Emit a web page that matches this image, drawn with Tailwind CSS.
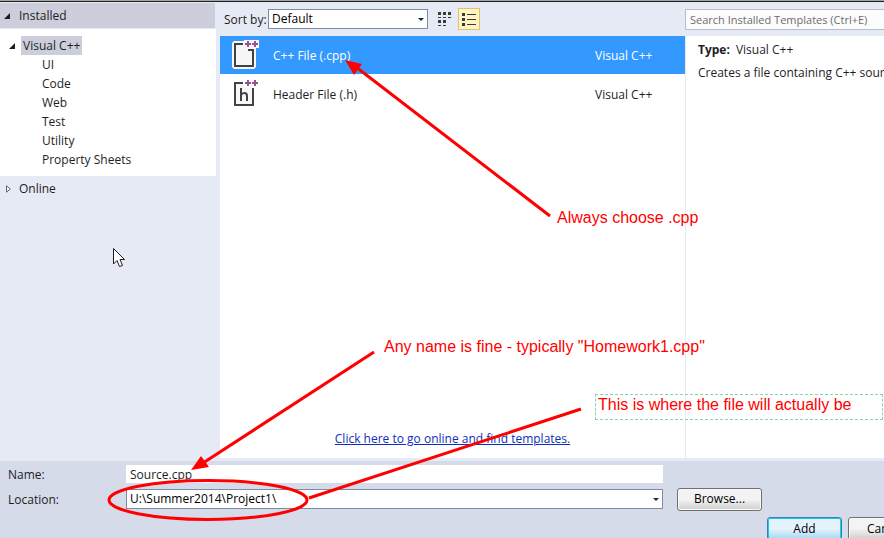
<!DOCTYPE html>
<html lang="en">
<head>
<meta charset="utf-8">
<title>Add New Item</title>
<script src="https://cdn.jsdelivr.net/npm/@tailwindcss/browser@4"></script>
</head>
<body class="relative flex h-screen flex-col overflow-hidden bg-[#e6eaf5] font-['Open_Sans','Noto_Sans',sans-serif] text-[12px] leading-[19px] text-[#1e1e1e]">
<div class="h-[2px] shrink-0 border-b border-[#1e1e1e] bg-[#a5a8ab]"></div>

<main class="flex min-h-0 flex-1">
  <nav class="w-[220px] shrink-0 pt-px" aria-label="Template categories">
    <button class="flex h-[25px] w-[215px] items-center bg-[#cccedb] pl-[4px] text-left">
      <svg class="mr-[9px] size-[6px]" viewBox="0 0 6 6"><path d="M6 0V6H0Z" fill="#1e1e1e"/></svg>Installed
    </button>
    <div class="mt-px h-[147px] w-[216px] bg-white pt-[7px]">
      <button class="flex items-center pl-[9px] text-left">
        <svg class="mr-[6px] size-[6px]" viewBox="0 0 6 6"><path d="M6 0V6H0Z" fill="#1e1e1e"/></svg>
        <span class="bg-[#cccedb] px-[2px]">Visual C++</span>
      </button>
      <ul class="pl-[42px]">
        <li><button class="block">UI</button></li>
        <li><button class="block">Code</button></li>
        <li><button class="block">Web</button></li>
        <li><button class="block">Test</button></li>
        <li><button class="block">Utility</button></li>
        <li><button class="block">Property Sheets</button></li>
      </ul>
    </div>
    <button class="flex h-[25px] items-center pl-[6px] text-left">
      <svg class="mr-[8px] h-[8px] w-[5px]" viewBox="0 0 5 8"><path d="M.5 .8L4.3 4L.5 7.2Z" fill="#fff" stroke="#666"/></svg>Online
    </button>
  </nav>

  <div class="flex min-w-0 flex-1 flex-col">
    <div class="flex h-[34px] shrink-0 items-center">
      <div class="flex w-[465px] shrink-0 items-center pl-[4px]">
        <label for="sort" class="w-[44px] whitespace-nowrap">Sort by:</label>
        <div class="relative">
          <select id="sort" class="block h-[20px] w-[160px] appearance-none border border-[#7d8ba1] bg-white px-[3px] leading-[18px] text-black"><option>Default</option></select>
          <svg class="pointer-events-none absolute top-[9px] right-[4px] h-[3px] w-[6px]" viewBox="0 0 6 3"><path d="M0 0H6L3 3Z" fill="#1b293e"/></svg>
        </div>
        <button class="ml-[10px]" aria-label="Small icons">
          <svg class="h-[15px] w-[13px]" viewBox="0 0 13 15" fill="#3a3a3d"><path d="M0 0h3v3H0zM5 0h3v3H5zM10 0h3v3h-3zM0 5h3v1H0zM5 5h3v1H5zM10 5h3v1h-3zM0 8h3v3H0zM5 8h3v3H5zM0 13h3v1H0zM5 13h3v1H5z"/></svg>
        </button>
        <button class="ml-[7px] flex h-[22px] w-[22px] items-center justify-center border border-[#e5c365] bg-[#fff4c6]" aria-label="List view">
          <svg class="h-[13px] w-[14px]" viewBox="0 0 14 13" fill="#3a3a3d"><path d="M0 0h3v3H0zM0 5h3v3H0zM0 10h3v3H0zM5 1h9v1H5zM5 6h9v1H5zM5 11h9v1H5z"/></svg>
        </button>
      </div>
      <input type="text" aria-label="Search templates" placeholder="Search Installed Templates (Ctrl+E)" class="h-[21px] min-w-0 flex-1 border border-r-0 border-[#b6bdcd] bg-[#fcfcfc] pl-[4px] text-[11px] outline-none placeholder:text-[#6d6d6d]">
    </div>

    <div class="flex min-h-0 flex-1 pb-[3px]">
      <section class="flex w-[465px] shrink-0 flex-col bg-white">
        <button class="flex h-[38px] w-full items-center bg-[#3399ff] pl-[11px] text-left text-white">
          <svg class="mr-[14px] h-[30px] w-[28px]" viewBox="0 0 28 30">
            <path d="M3 1H13V0H28V8H25V27L23 29H3L1 27V3Z" fill="#f7f7f7"/>
            <path d="M12 4H4V26H22V10H17" fill="none" stroke="#424242" stroke-width="2"/>
            <path d="M14 4h6M17 1v6M21 4h6M24 1v6" stroke="#9b4f96" stroke-width="2"/>
          </svg>
          <span class="w-[322px]">C++ File (.cpp)</span><span>Visual C++</span>
        </button>
        <button class="flex h-[40px] w-full items-center pl-[11px] text-left">
          <svg class="mr-[14px] h-[30px] w-[28px]" viewBox="0 0 28 30">
            <path d="M4 4H13V9H22V26H4Z" fill="#f7f7f7"/>
            <path d="M12 4H4V26H22V9" fill="none" stroke="#424242" stroke-width="2"/>
            <path d="M10 9V22M10 16Q11 14 13.500 14Q16 14 16 17V22" fill="none" stroke="#424242" stroke-width="2"/>
            <path d="M14 4h6M17 1v6M21 4h6M24 1v6" stroke="#9b4f96" stroke-width="2"/>
          </svg>
          <span class="w-[322px]">Header File (.h)</span><span>Visual C++</span>
        </button>
        <a href="#" class="mx-auto mt-auto mb-[10px] text-[#0e2fb8] underline">Click here to go online and find templates.</a>
      </section>
      <aside class="min-w-0 flex-1 overflow-hidden border-l border-[#e6eaf5] bg-white pt-[4px] pl-[12px] whitespace-nowrap">
        <p><strong class="mr-[6px]">Type:</strong>Visual C++</p>
        <p class="mt-[4px]">Creates a file containing C++ source code</p>
      </aside>
    </div>
  </div>
</main>

<footer class="h-[77px] shrink-0 overflow-hidden bg-[#d6dbe9] pt-[3px] pl-[8px]">
  <div class="flex h-[20px] items-center">
    <label for="name" class="w-[118px]">Name:</label>
    <input id="name" value="Source.cpp" class="h-[18px] w-[537px] bg-white px-[4px] outline-none">
  </div>
  <div class="mt-[2px] flex h-[26px] items-center">
    <label for="location" class="w-[118px]">Location:</label>
    <div class="relative">
      <select id="location" class="block h-[20px] w-[537px] appearance-none border border-[#7d8ba1] bg-white px-[3px] leading-[18px] text-black"><option>U:\Summer2014\Project1\</option></select>
      <svg class="pointer-events-none absolute top-[9px] right-[4px] h-[3px] w-[6px]" viewBox="0 0 6 3"><path d="M0 0H6L3 3Z" fill="#1b293e"/></svg>
    </div>
    <button class="ml-[14px] h-[23px] w-[85px] rounded-[3px] border border-[#707070] bg-linear-to-b from-[#f3f3f3] from-50% to-[#cfcfcf] to-100% leading-none text-black shadow-[inset_0_0_0_1px_#fafafa]">Browse...</button>
  </div>
  <div class="mt-[5px] flex gap-[6px] pl-[759px]">
    <button class="h-[23px] w-[75px] shrink-0 rounded-[3px] border border-[#3c7fb1] bg-linear-to-b from-[#e5f4fc] from-50% to-[#a5d8f3] to-100% leading-none text-black shadow-[inset_0_0_0_1px_#15cbf5]">Add</button>
    <button class="h-[23px] w-[75px] shrink-0 rounded-[3px] border border-[#707070] bg-linear-to-b from-[#f3f3f3] from-50% to-[#cfcfcf] to-100% leading-none text-black shadow-[inset_0_0_0_1px_#fafafa]">Cancel</button>
  </div>
</footer>

<svg class="pointer-events-none absolute top-0 left-0 h-[538px] w-[884px]" viewBox="0 0 884 538" fill="none" aria-hidden="true">
  <g stroke="#f00" stroke-width="3">
    <path d="M550 216L356 67M374 352L203 463M581 409L309 498"/>
    <ellipse cx="208" cy="500" rx="99" ry="19.500"/>
  </g>
  <path d="M345 60L362 64L354 75ZM191 470L201 456L209 467Z" fill="#f00"/>
  <path d="M113.500 248.500V264L117 260.500L119.500 266.500L122.500 265.500L120 259.500H124.500Z" fill="#fff" stroke="#1c1c2c"/>
</svg>
<div class="pointer-events-none absolute top-[208px] left-[557px] font-['Liberation_Sans',Arial,sans-serif] text-[16px] whitespace-nowrap text-[#f00]">Always choose .cpp</div>
<div class="pointer-events-none absolute top-[337px] left-[384px] font-['Liberation_Sans',Arial,sans-serif] text-[16px] whitespace-nowrap text-[#f00]">Any name is fine - typically "Homework1.cpp"</div>
<div class="pointer-events-none absolute top-[394px] left-[595px] h-[26px] w-[288px] border border-dashed border-[#8fd0ae] pl-[2px] font-['Liberation_Sans',Arial,sans-serif] text-[16px] whitespace-nowrap text-[#f00]">This is where the file will actually be</div>
</body>
</html>
